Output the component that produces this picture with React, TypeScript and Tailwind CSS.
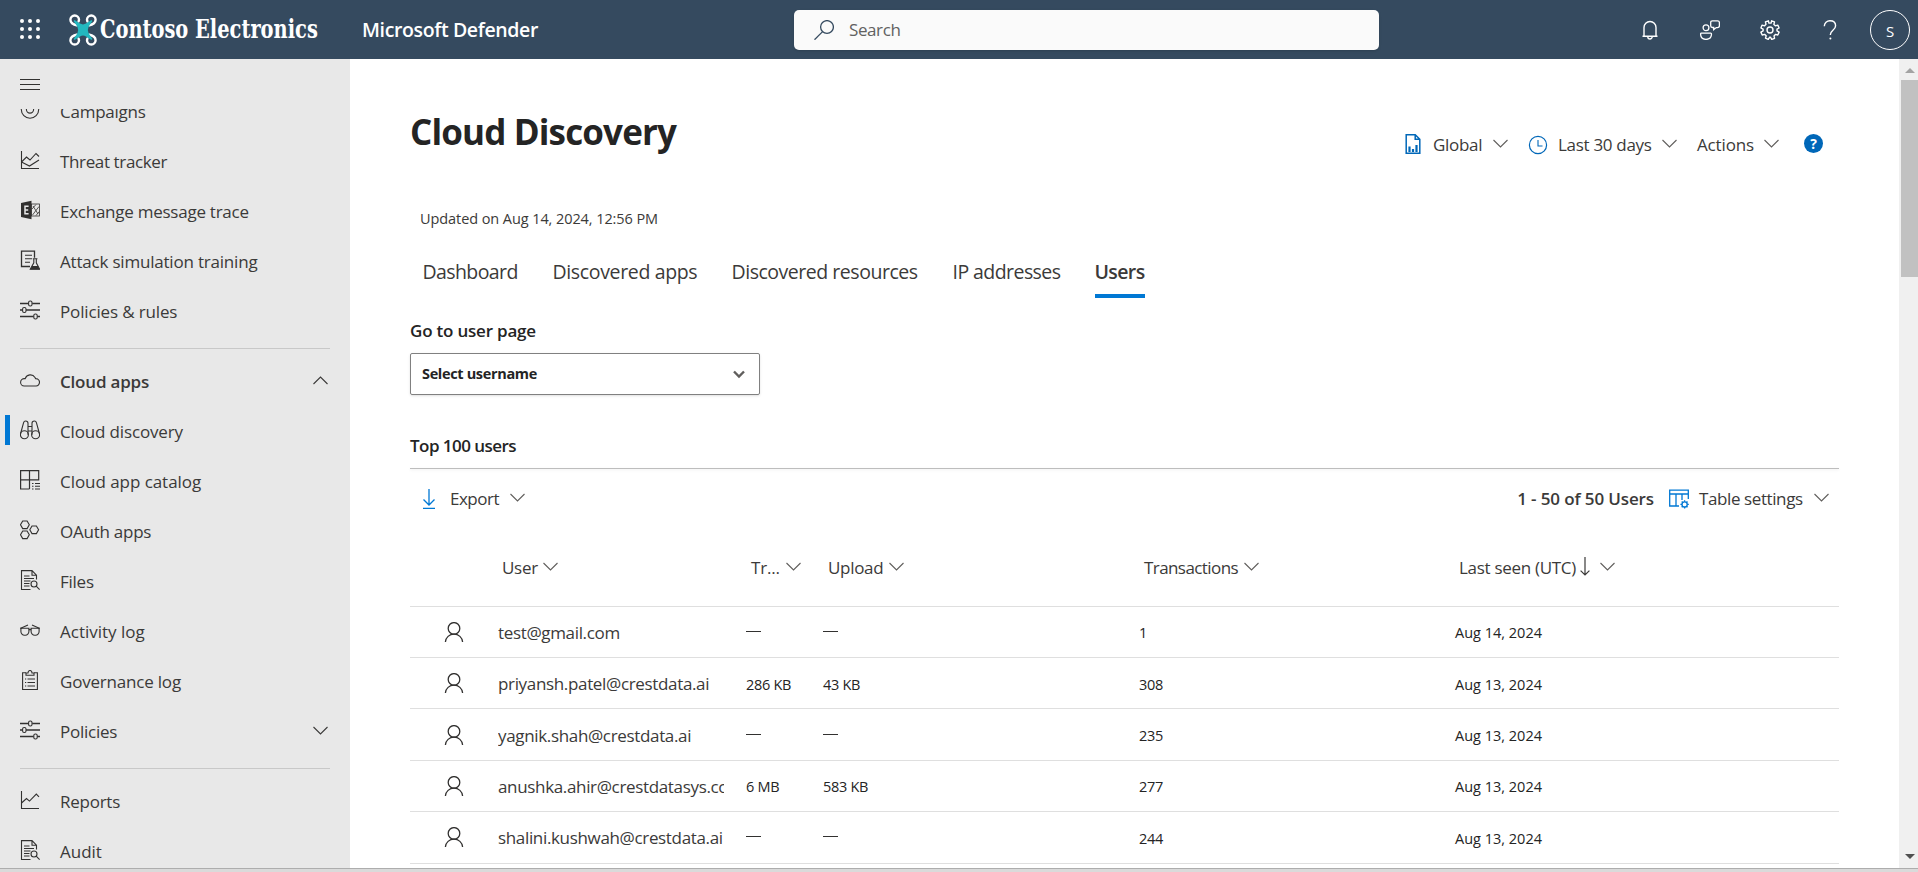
import type { ReactNode } from "react";
import clsx from "clsx";

function Icon({ children, size = 20, className }: { children: ReactNode; size?: number; className?: string }) {
  return (
    <svg
      width={size}
      height={size}
      viewBox="0 0 20 20"
      fill="none"
      stroke="currentColor"
      strokeWidth="1.1"
      className={clsx("shrink-0", className)}
    >
      {children}
    </svg>
  );
}

function Chevron({ up, className }: { up?: boolean; className?: string }) {
  return (
    <svg width="15" height="9" viewBox="0 0 15 9" fill="none" stroke="currentColor" strokeWidth="1.1" className={clsx("shrink-0", className)}>
      <path d={up ? "M0.5 8 L7.5 1 L14.5 8" : "M0.5 1 L7.5 8 L14.5 1"} />
    </svg>
  );
}

const chartAxes = <path d="M1.5 1v17.5H19" />;

const policies = (
  <>
    <path d="M0 3.5h8.6M12.2 3.5H20M0 10h2.4M6 10h14M0 16.5h13.6M17.2 16.5H20" strokeWidth="1.3" />
    <rect x="8.6" y="1" width="3.4" height="5" rx="1.5" />
    <rect x="2.6" y="7.5" width="3.4" height="5" rx="1.5" />
    <rect x="13.8" y="14" width="3.4" height="5" rx="1.5" />
  </>
);

const fileSearch = (
  <>
    <path d="M10.5 19.5H1.5V.6H12l4.5 4.6v4.3M12 .6v4.6h4.5" />
    <path d="M4 6h5.5M4 8.5h10M4 11h6.5M4 13.5h5.5M4 16h5.5" />
    <circle cx="14" cy="14" r="3" />
    <path d="m16.2 16.2 3.4 3.4" />
  </>
);

const icons: Record<string, ReactNode> = {
  campaigns: (
    <>
      <circle cx="10" cy="9.5" r="8.7" />
      <circle cx="10" cy="9.5" r="3.6" />
    </>
  ),
  tracker: (
    <>
      {chartAxes}
      <path d="m1.5 12 5-5 3.5 3 6-6.5 3 3M1.5 12l8 4 9.5-6" />
    </>
  ),
  exchange: (
    <>
      <path d="M1 3 11.5.8v18.4L1 17z" fill="currentColor" stroke="none" />
      <path d="M8.6 6.3H5v7.4h3.6M5 10h3.2" stroke="#e8e8e8" strokeWidth="1.5" />
      <rect x="11.5" y="4" width="8" height="12" strokeWidth="0.8" />
      <path d="m12 9 4-4.5M12.5 15l6.5-8.5M16 15.5l3.3-4M13 6l5 8" strokeWidth="0.8" />
    </>
  ),
  simulation: (
    <>
      <path d="M10 16.5H1.5V1.2h13v6.6" strokeWidth="1.3" />
      <path d="M5 5.3h7M5 8.8h7M5 12.3h5" />
      <path d="M12.8 8.8h4.6M13.8 8.8v4l-3.5 6.4h9.3l-3.3-6.4v-4" />
      <path d="m12 16-1.9 3.5h9.7L18 16z" fill="currentColor" stroke="none" />
    </>
  ),
  policies,
  cloud: <path d="M4.2 16A3.7 3.7 0 0 1 4.4 8.6h.8A5.4 5.4 0 0 1 15 7.5l.6 1.1A3.7 3.7 0 0 1 16 16z" />,
  binoculars: (
    <>
      <circle cx="4.4" cy="14.7" r="4" />
      <circle cx="15.6" cy="14.7" r="4" />
      <path d="M.6 13.5 3.6 2.6Q4 1 5.6 1 8 1 8 3.2v11.5M19.4 13.5l-3-10.9Q16 1 14.4 1 12 1 12 3.2v11.5M8 6.5h4M8 11h4" />
    </>
  ),
  catalog: (
    <>
      <path d="M9.5 19H.6V.6h18.1v9.2H.6M9.5.6V19" strokeWidth="1.2" />
      <path d="M12 13.5h1.5M15 13.5h5M12 16.2h1.5M15 16.2h5M12 19h1.5M15 19h5" />
    </>
  ),
  oauth: (
    <path d="M2.7 1h4.4l2.2 3.8-2.2 3.8H2.7L.5 4.8zM2.7 11h4.4l2.2 3.8-2.2 3.8H2.7L.5 14.8zM12 6h4.4l2.2 3.8-2.2 3.8H12L9.8 9.8z" />
  ),
  fileSearch,
  glasses: (
    <>
      <path d="M.9 8.2h8v3.4a3.6 3.6 0 0 1-3.6 3.6h-.8a3.6 3.6 0 0 1-3.6-3.6z" />
      <path d="M11.1 8.2h8v3.4a3.6 3.6 0 0 1-3.6 3.6h-.8a3.6 3.6 0 0 1-3.6-3.6z" />
      <path d="M8.8 9.6h2.4M.2 8.2h2M17.8 8.2h2M.7 8.2 8 5M19.3 8.2 12 5" />
    </>
  ),
  clipboard: (
    <>
      <path d="M6 2.8H2.6v16.7h14.8V2.8H14" />
      <path d="M6 5.2V3h2c0-1.5.8-2.5 2-2.5s2 1 2 2.5h2v2.2z" />
      <path d="M5 9h1.2M7.5 9H15M5 12.5h1.2M7.5 12.5H15M5 16h1.2M7.5 16H15" />
    </>
  ),
  reports: (
    <>
      {chartAxes}
      <path d="m1.5 13 5-4.5 3 2.6L16.3 4 19 6.8" />
    </>
  ),
};

function NavItem({
  icon,
  label,
  track = "tracking-[-0.25px]",
  bold,
  active,
  chevron,
}: {
  icon: string;
  label: string;
  track?: string;
  bold?: boolean;
  active?: boolean;
  chevron?: "up" | "down";
}) {
  return (
    <div className="flex h-[50px] shrink-0 items-center pr-[22px]">
      <div className={clsx("ml-[5px] h-[30px] w-[5px]", active && "bg-[#0078d4]")} />
      <Icon className="ml-[10px] text-[#323130]">{icons[icon]}</Icon>
      <span className={clsx("ml-5 flex-1 pt-[3px] text-[17px] leading-[21px]", track, bold && "font-semibold")}>{label}</span>
      {chevron && <Chevron up={chevron === "up"} />}
    </div>
  );
}

function Divider() {
  return <div className="mt-[13px] mr-5 mb-[6px] ml-5 h-px shrink-0 bg-[#c8c8c8]" />;
}

const tabs = [
  { label: "Dashboard", className: "w-[96px] tracking-[-0.6px]" },
  { label: "Discovered apps", className: "w-[145px] tracking-[-0.35px]" },
  { label: "Discovered resources", className: "w-[187px] tracking-[-0.47px]" },
  { label: "IP addresses", className: "w-[108px] tracking-[-0.56px]" },
];

const rows = [
  { user: "test@gmail.com", traffic: "—", upload: "—", transactions: "1", seen: "Aug 14, 2024" },
  { user: "priyansh.patel@crestdata.ai", traffic: "286 KB", upload: "43 KB", transactions: "308", seen: "Aug 13, 2024" },
  { user: "yagnik.shah@crestdata.ai", traffic: "—", upload: "—", transactions: "235", seen: "Aug 13, 2024" },
  { user: "anushka.ahir@crestdatasys.com", traffic: "6 MB", upload: "583 KB", transactions: "277", seen: "Aug 13, 2024" },
  { user: "shalini.kushwah@crestdata.ai", traffic: "—", upload: "—", transactions: "244", seen: "Aug 13, 2024" },
];

const columns = "grid grid-cols-[88px_248px_77px_316px_316px_1fr] border-b border-[#dfdfdf]";
const cellText = "self-center pt-[3px] text-[14.5px] leading-5 text-[#242424]";

function Size({ value }: { value: string }) {
  if (value === "—") return <span className="mb-[1px] h-px w-[15px] self-center bg-[#323130]" />;
  return <span className={clsx(cellText, "tracking-[-0.3px]")}>{value}</span>;
}

function TopBar() {
  return (
    <header className="flex h-[59px] shrink-0 items-center bg-[#354a5f] text-white">
      <div className="flex w-[794px] shrink-0 items-center">
        <div className="mb-[2px] ml-5 grid grid-cols-3 gap-[4px]">
          {Array.from({ length: 9 }, (_, i) => (
            <span key={i} className="size-[4px] rounded-full bg-white" />
          ))}
        </div>
        <svg width="28" height="32" viewBox="0 0 28 32" fill="none" className="ml-[29px] shrink-0">
          <g stroke="white" strokeWidth="2.4">
            <path d="M8.5 11.5C3 10.5 1.4 8 1.4 5.8a4.3 4.3 0 0 1 8.6 0c0 1-.4 1.7-1 2.3" />
            <path d="M19.5 11.5c5.5-1 7.1-3.5 7.1-5.7a4.3 4.3 0 0 0-8.6 0c0 1 .4 1.7 1 2.3" />
            <path d="M8.5 20.5c-5.5 1-7.1 3.5-7.1 5.7a4.3 4.3 0 0 0 8.6 0c0-1-.4-1.7-1-2.3" />
            <path d="M19.5 20.5c5.5 1 7.1 3.5 7.1 5.7a4.3 4.3 0 0 1-8.6 0c0-1 .4-1.7 1-2.3" />
          </g>
          <path
            d="M5.6 6 11 9.6q3 1.6 6 0L22.400 6l1 1-3.800 5.700q-1.600 3.300 0 6.600l3.800 5.700-1 1-5.400-3.600q-3-1.600-6 0L5.600 26l-1-1 3.800-5.700q1.600-3.300 0-6.600L4.600 7z"
            fill="#23b8bf"
          />
        </svg>
        <span className="ml-[3px] w-[261px] origin-left scale-x-[0.83] font-['DejaVu_Serif_Condensed','DejaVu_Serif',serif] text-[26px] leading-[31px] font-bold whitespace-nowrap [font-stretch:condensed]">
          Contoso Electronics
        </span>
        <span className="ml-px text-[19.5px] leading-[27px] font-semibold tracking-[-0.37px] whitespace-nowrap">Microsoft Defender</span>
      </div>
      <div className="flex h-10 w-[585px] shrink-0 items-center rounded-[5px] bg-[#fafafa] shadow-sm">
        <Icon className="ml-5 text-[#354a5f]">
          <circle cx="13" cy="7" r="6.4" strokeWidth="1.3" />
          <path d="M8.6 11.6.5 19.7" strokeWidth="1.3" />
        </Icon>
        <span className="ml-[15px] text-[17px] leading-[21px] tracking-[-0.4px] text-[#616161]">Search</span>
      </div>
      <div className="ml-[241px] flex shrink-0 items-center">
        <div className="flex w-[60px] justify-center">
          <Icon>
            <path d="M2.5 16.3h15M4 16V7.5a6 6 0 0 1 12 0V16M7.8 16.8a2.2 2.2 0 0 0 4.4 0" strokeWidth="1.4" />
          </Icon>
        </div>
        <div className="flex w-[60px] justify-center">
          <Icon>
            <g strokeWidth="1.3">
              <circle cx="6" cy="7.8" r="2.9" />
              <path d="M1.3 13.2h9.4q.8 0 .8.9c0 3.3-2 5.3-5.5 5.3S.6 17.4.6 14.1q0-.9.7-.9z" />
              <path d="M12.4.8h5.2q1.8 0 1.8 1.8v3.2q0 1.8-1.8 1.8h-1.3l-2.6 2V7.5h-1.3q-1.7 0-1.7-1.8V2.6q0-1.8 1.7-1.8z" />
            </g>
          </Icon>
        </div>
        <div className="flex w-[60px] justify-center">
          <Icon>
            <path
              d="m8.4.8.5 2.3h2.2l.5-2.3 2.9 1.1-.6 2.5 1.5 1.4 2.4-.7 1.3 2.9-2.1 1.2v1.7l2.1 1.3-1.3 2.8-2.4-.6-1.4 1.5.6 2.4-2.9 1.1-1.3-2.2H9.7l-1.4 2.2-2.8-1.2.7-2.4-1.6-1.4-2.4.6L.9 12.1l2.2-1.2V9.2L.9 8l1.2-2.9 2.5.7L6 4.3l-.6-2.4z"
              strokeWidth="1.4"
              strokeLinejoin="round"
            />
            <circle cx="10" cy="10" r="3" strokeWidth="1.4" />
          </Icon>
        </div>
        <div className="flex w-[60px] justify-center">
          <Icon>
            <path d="M4.3 6.2A5.600 5.600 0 0 1 10 .8c3.300 0 5.600 2 5.600 5 0 4.400-5.200 4.600-5.200 8.700v.6" strokeWidth="1.4" />
            <circle cx="10.4" cy="18.6" r="1" fill="currentColor" stroke="none" />
          </Icon>
        </div>
        <div className="flex w-[60px] justify-center">
          <div className="flex size-10 items-center justify-center rounded-full border border-white pt-[2px] text-[15px] leading-5">S</div>
        </div>
      </div>
    </header>
  );
}

function Sidebar() {
  return (
    <nav className="flex w-[350px] shrink-0 flex-col overflow-hidden bg-[#e8e8e8]">
      <div className="flex h-[50px] shrink-0 flex-col gap-[4px] pt-5 pl-5">
        <span className="h-px w-5 bg-[#323130]" />
        <span className="h-px w-5 bg-[#323130]" />
        <span className="h-px w-5 bg-[#323130]" />
      </div>
      <div className="flex min-h-0 flex-1 flex-col overflow-hidden">
        <div className="-mt-6 flex flex-col">
          <NavItem icon="campaigns" label="Campaigns" />
          <NavItem icon="tracker" label="Threat tracker" track="tracking-[-0.37px]" />
          <NavItem icon="exchange" label="Exchange message trace" />
          <NavItem icon="simulation" label="Attack simulation training" track="tracking-[-0.2px]" />
          <NavItem icon="policies" label="Policies & rules" track="tracking-[-0.15px]" />
          <Divider />
          <NavItem icon="cloud" label="Cloud apps" track="tracking-[-0.2px]" bold chevron="up" />
          <NavItem icon="binoculars" label="Cloud discovery" track="tracking-[-0.15px]" active />
          <NavItem icon="catalog" label="Cloud app catalog" track="tracking-[-0.05px]" />
          <NavItem icon="oauth" label="OAuth apps" />
          <NavItem icon="fileSearch" label="Files" />
          <NavItem icon="glasses" label="Activity log" track="tracking-normal" />
          <NavItem icon="clipboard" label="Governance log" track="tracking-[-0.2px]" />
          <NavItem icon="policies" label="Policies" chevron="down" />
          <Divider />
          <NavItem icon="reports" label="Reports" />
          <NavItem icon="fileSearch" label="Audit" track="tracking-normal" />
        </div>
      </div>
    </nav>
  );
}

function PageActions() {
  return (
    <div className="mt-[26px] mr-4 flex h-[21px] text-[17px] leading-[21px] whitespace-nowrap">
      <Icon className="-ml-px text-[#0067b8]">
        <path d="M3.2.7h9l4.6 4.6v14H3.2zM12.2.7v4.6h4.6" strokeWidth="1.5" />
        <path d="M6.5 18v-5.500M10 18v-3M13.500 18v-7" strokeWidth="2.2" />
      </Icon>
      <span className="ml-[10px] w-[51px] tracking-[-0.3px]">Global</span>
      <Chevron className="mt-[5px] ml-[9px] text-[#605e5c]" />
      <Icon className="mt-px ml-[20px] text-[#0067b8]">
        <circle cx="10" cy="10" r="8.6" strokeWidth="1.2" />
        <path d="M10 5v6h4.5" />
      </Icon>
      <span className="ml-[10px] w-[94px] tracking-[-0.3px]">Last 30 days</span>
      <Chevron className="mt-[5px] ml-[10px] text-[#605e5c]" />
      <span className="ml-[20px] w-[57px] tracking-[-0.14px]">Actions</span>
      <Chevron className="mt-[5px] ml-[10px] text-[#605e5c]" />
      <div className="ml-[25px] flex size-[19px] items-center justify-center rounded-full bg-[#0067b8]">
        <span className="text-[14px] leading-[19px] font-bold text-white">?</span>
      </div>
    </div>
  );
}

function HeaderCell({ label, gap, pad, track }: { label: string; gap: string; pad: string; track: string }) {
  return (
    <div className={clsx("flex pt-[29px]", pad)}>
      <span className={track}>{label}</span>
      <Chevron className={clsx("mt-[5px] text-[#605e5c]", gap)} />
    </div>
  );
}

function UsersTable() {
  return (
    <>
      <div className={clsx(columns, "h-[78.6px] text-[17px] leading-[21px] whitespace-nowrap")}>
        <span />
        <HeaderCell label="User" pad="pl-[4px]" gap="ml-[5px]" track="tracking-[-0.3px]" />
        <HeaderCell label="Tr..." pad="pl-[5px]" gap="ml-[6px]" track="tracking-[-0.2px]" />
        <HeaderCell label="Upload" pad="pl-[5px]" gap="ml-[6px]" track="tracking-[-0.3px]" />
        <HeaderCell label="Transactions" pad="pl-[5px]" gap="ml-[6px]" track="tracking-[-0.58px]" />
        <div className="flex pt-[29px] pl-[4px]">
          <span className="tracking-[-0.3px]">Last seen (UTC)</span>
          <svg width="10" height="19" viewBox="0 0 10 19" fill="none" stroke="currentColor" strokeWidth="1.2" className="ml-[4px]">
            <path d="M5 0v18M.6 13.6 5 18l4.4-4.4" />
          </svg>
          <Chevron className="mt-[5px] ml-[10px] text-[#605e5c]" />
        </div>
      </div>
      {rows.map((row) => (
        <div key={row.user} className={clsx(columns, "h-[51.4px]")}>
          <Icon className="ml-[34px] self-center text-[#323130]">
            <circle cx="10" cy="6.4" r="5.8" strokeWidth="1.3" />
            <path d="M1.4 20c.3-4.600 4-7.800 8.600-7.800s8.300 3.200 8.600 7.800" strokeWidth="1.3" />
          </Icon>
          <span className="w-[226px] self-center overflow-hidden pt-px text-[17px] leading-[23px] tracking-[-0.34px] whitespace-nowrap">
            {row.user}
          </span>
          <Size value={row.traffic} />
          <Size value={row.upload} />
          <span className={clsx(cellText, "tracking-[-0.3px]")}>{row.transactions}</span>
          <span className={cellText}>{row.seen}</span>
        </div>
      ))}
    </>
  );
}

export default function App() {
  return (
    <div className="flex h-[872px] w-[1918px] flex-col overflow-hidden bg-white font-['Open_Sans','Noto_Sans',sans-serif] text-[#3b3a39]">
      <TopBar />
      <div className="flex min-h-0 flex-1">
        <Sidebar />
        <main className="min-w-0 flex-1 overflow-hidden pr-[60px] pl-[60px]">
          <div className="mt-[49px] flex h-[47px] justify-between">
            <h1 className="text-[35px] leading-[47px] font-bold tracking-[-0.86px] text-[#242424]">Cloud Discovery</h1>
            <PageActions />
          </div>
          <p className="mt-[54px] ml-[10px] text-[14.5px] leading-5 tracking-[-0.08px]">Updated on Aug 14, 2024, 12:56 PM</p>
          <div className="mt-[29px] flex gap-[34px] pl-[12.5px] text-[19.5px] leading-[27px] whitespace-nowrap">
            {tabs.map((tab) => (
              <span key={tab.label} className={tab.className}>
                {tab.label}
              </span>
            ))}
            <span className="h-10 w-[50px] border-b-4 border-[#0078d4] font-semibold tracking-[-0.62px]">Users</span>
          </div>
          <h2 className="mt-[22px] text-[17px] leading-[21px] font-semibold tracking-[-0.2px] text-[#242424]">Go to user page</h2>
          <div className="mt-3 flex h-[42px] w-[350px] items-center justify-between rounded-[2px] border border-[#808080] pr-[14px] pl-[11px] shadow-sm">
            <span className="text-[14.5px] leading-5 font-bold tracking-[-0.34px] text-[#242424]">Select username</span>
            <svg width="12" height="9" viewBox="0 0 12 9" fill="none" stroke="#605e5c" strokeWidth="2.4">
              <path d="m1 1.5 5 5 5-5" />
            </svg>
          </div>
          <h2 className="mt-10 text-[17px] leading-[21px] font-semibold tracking-[-0.54px] text-[#242424]">Top 100 users</h2>
          <div className="mt-3 h-px bg-[#bdbdbd] shadow-sm" />
          <div className="flex h-[59px] items-center text-[17px] leading-[21px] whitespace-nowrap">
            <svg width="12" height="20" viewBox="0 0 12 20" fill="none" stroke="#0078d4" strokeWidth="1.3" className="ml-[13px]">
              <path d="M6 0v16M.5 10.500 6 16l5.500-5.500M0 19.300h12" />
            </svg>
            <span className="ml-[15px] w-[51px] tracking-[-0.5px]">Export</span>
            <Chevron className="mb-[3px] ml-[9px] text-[#605e5c]" />
            <span className="mr-[15px] ml-auto font-semibold tracking-[-0.12px]">1 - 50 of 50 Users</span>
            <Icon className="text-[#0078d4]">
              <g strokeWidth="1.3">
                <path d="M10 17H.7V1.2h18.600V10M.7 5h18.600M7 5v12M13 5v6" />
                <circle cx="15.6" cy="15.4" r="2.6" />
                <path d="M15.6 11.2v1.6M15.6 18v1.6M11.4 15.4H13M18.2 15.4h1.6M12.7 12.500l1 1M17.500 17.300l1 1M12.700 18.300l1-1M17.500 13.500l1-1" />
              </g>
            </Icon>
            <span className="ml-[10px] w-[104px] tracking-[-0.4px]">Table settings</span>
            <Chevron className="mr-[10px] mb-[3px] ml-[11px] text-[#605e5c]" />
          </div>
          <UsersTable />
        </main>
        <div className="flex w-[19px] shrink-0 flex-col items-center bg-[#f0f0f0] pl-[2px]">
          <svg width="10" height="5" viewBox="0 0 10 5" className="mt-[9px] shrink-0">
            <path d="M0 5 5 0l5 5z" fill="#a3a3a3" />
          </svg>
          <div className="mt-[7px] h-[197px] w-[17px] shrink-0 bg-[#c1c1c1]" />
          <svg width="10" height="5" viewBox="0 0 10 5" className="mt-auto mb-[9px] shrink-0">
            <path d="m0 0 5 5 5-5z" fill="#505050" />
          </svg>
        </div>
      </div>
      <div className="h-1 shrink-0 border-t border-[#adadad] bg-[#dadada]" />
    </div>
  );
}
